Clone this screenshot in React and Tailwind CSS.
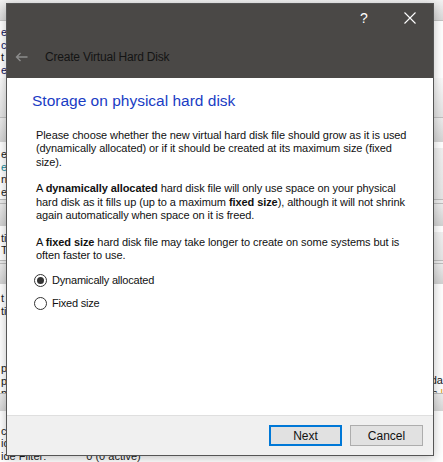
import React from "react";

function BackArrow() {
  return (
    <svg width="13" height="10" viewBox="0 0 13 10" fill="none" stroke="#8c8c8c" strokeWidth="1.4">
      <path d="M12.5 5H1.5M5.5 1L1.5 5L5.5 9" />
    </svg>
  );
}

function CloseX() {
  return (
    <svg width="12" height="12" viewBox="0 0 12 12" fill="none" stroke="#ffffff" strokeWidth="1.1">
      <path d="M0.5 0.5L11.5 11.5M11.5 0.5L0.5 11.5" />
    </svg>
  );
}

function Radio({ checked, label, className }) {
  return (
    <div className={"flex items-center h-[13px] pl-[27px] " + className}>
      <span className="w-[13px] h-[13px] rounded-full border border-[#333333] bg-white flex items-center justify-center shrink-0">
        {checked && <span className="w-[7px] h-[7px] rounded-full bg-[#333333]" />}
      </span>
      <span className="ml-[5px] text-[11px] tracking-[-0.2px] leading-[13px] text-[#111111] whitespace-nowrap">{label}</span>
    </div>
  );
}

function Background() {
  return (
    <div className="flex flex-col w-full h-full text-[11px] leading-[12.5px] text-[#1a1a1a]">
      <div className="h-[22px] bg-gradient-to-b from-[#f2f2f2] to-[#d9d9d9] border-b border-[#c4c4c4]" />
      <div className="h-[58px] bg-white pt-[5px] pl-[1px] text-[#12125a]">
        <div>e</div>
        <div>ce</div>
        <div className="text-[#111]">t</div>
        <div>el</div>
      </div>
      <div className="h-[42px] bg-gradient-to-b from-[#fafafa] to-[#e2e2e2] border-b border-[#c0c0c0]" />
      <div className="h-[25px] bg-gradient-to-b from-[#ececec] to-[#d4d4d4]" />
      <div className="h-[58px] bg-white pt-[6px] pl-[1px] flex justify-between">
        <div>
          <div>ec</div>
          <div className="text-[#1a8a9a]">e</div>
          <div>nc</div>
          <div>ec</div>
        </div>
        <div className="w-[9px] h-full bg-gradient-to-b from-[#f0f0f0] to-[#e4e4e4]" />
      </div>
      <div className="h-[5px] bg-[#ececec] border-y border-[#bdbdbd]" />
      <div className="h-[23px] bg-gradient-to-b from-[#ececec] to-[#d2d2d2]" />
      <div className="h-[35px] bg-white pt-[6px] pl-[1px] flex justify-between">
        <div>
          <div>ti</div>
          <div>T</div>
        </div>
        <div className="w-[9px] h-full bg-gradient-to-b from-[#f0f0f0] to-[#e4e4e4]" />
      </div>
      <div className="h-[4px] bg-[#ececec] border-y border-[#bdbdbd]" />
      <div className="h-[21px] bg-gradient-to-b from-[#ececec] to-[#d2d2d2]" />
      <div className="h-[109px] bg-white pt-[8px] pl-[1px] flex justify-between">
        <div>
          <div>t</div>
          <div>ti</div>
          <div className="h-[45px]" />
          <div>p</div>
          <div>p</div>
          <div>p</div>
        </div>
        <div className="pt-[82px] text-right">
          <div>da</div>
          <div>s <span className="text-[#e0a020]">l</span></div>
        </div>
      </div>
      <div className="h-[18px] bg-gradient-to-b from-[#ececec] to-[#d6d6d6] border-t border-[#bdbdbd]" />
      <div className="flex-1 bg-white pt-[14px] pl-[1px] leading-[12.5px]">
        <div>c</div>
        <div>ic</div>
        <div className="flex gap-[40px]">
          <span>ide Filter:</span>
          <span>0 (0 active)</span>
        </div>
      </div>
    </div>
  );
}

export default function App() {
  return (
    <div className="relative w-[443px] h-[462px] overflow-hidden bg-white font-['Liberation_Sans',Arial,sans-serif]">
      <Background />
      <div className="absolute left-[6px] top-[3px] w-[428px] h-[453px] border border-[#555555] flex flex-col shadow-[0_2px_10px_rgba(0,0,0,0.25)]">
        <div className="h-[74px] bg-[#4a4846] shrink-0">
          <div className="h-[28px] flex justify-end">
            <div className="w-[46px] flex items-center justify-center text-white text-[14px] leading-none">?</div>
            <div className="w-[46px] flex items-center justify-center">
              <CloseX />
            </div>
          </div>
          <div className="mt-[15px] h-[20px] flex items-center pl-[8px]">
            <BackArrow />
            <span className="ml-[17px] text-[12px] tracking-[-0.2px] text-[#141414] whitespace-nowrap">Create Virtual Hard Disk</span>
          </div>
        </div>
        <div className="h-[337px] bg-white shrink-0 pt-[13px]">
          <div className="pl-[25px] text-[15.5px] leading-[20px] text-[#1a3cc4] whitespace-nowrap">Storage on physical hard disk</div>
          <div className="mt-[18px] pl-[29px] text-[11px] leading-[13.3px] tracking-[-0.08px] text-[#111111] whitespace-nowrap">
            <p>
              Please choose whether the new virtual hard disk file should grow as it is used
              <br />
              (dynamically allocated) or if it should be created at its maximum size (fixed
              <br />
              size).
            </p>
            <p className="mt-[13.4px]">
              A <b>dynamically allocated</b> hard disk file will only use space on your physical
              <br />
              hard disk as it fills up (up to a maximum <b>fixed size</b>), although it will not shrink
              <br />
              again automatically when space on it is freed.
            </p>
            <p className="mt-[13.4px]">
              A <b>fixed size</b> hard disk file may take longer to create on some systems but is
              <br />
              often faster to use.
            </p>
          </div>
          <Radio checked label="Dynamically allocated" className="mt-[12px]" />
          <Radio label="Fixed size" className="mt-[10px]" />
        </div>
        <div className="flex-1 bg-[#f0f0f0] border-t border-[#dfdfdf] flex justify-end items-start gap-[8px] pt-[9px] pr-[10px]">
          <button className="w-[73px] h-[21px] bg-[#e1e1e1] border-2 border-[#0078d7] text-[12px] leading-none text-[#111]">Next</button>
          <button className="w-[73px] h-[21px] bg-[#e1e1e1] border border-[#adadad] text-[12px] leading-none text-[#111]">Cancel</button>
        </div>
      </div>
    </div>
  );
}
